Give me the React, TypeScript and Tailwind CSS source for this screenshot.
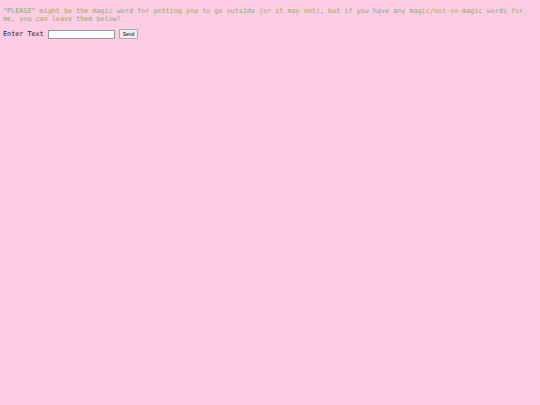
import { useState } from "react";

export default function App() {
  const [text, setText] = useState("");

  return (
    <div className="min-h-[405px] w-full bg-[#ffcce6] p-[3px] font-['DejaVu_Sans_Mono',monospace] text-[6.75px] leading-[8px]">
      <p className="mt-[4px] text-[#84b35c]">
        "PLEASE" might be the magic word for getting you to go outside (or it may not), but if you have any magic/not-so-magic words for me, you can leave them below!
      </p>
      <form
        className="mt-[6px] flex items-center"
        onSubmit={(e) => {
          e.preventDefault();
          setText("");
        }}
      >
        <label className="text-[#222]">Enter Text</label>
        <input
          value={text}
          onChange={(e) => setText(e.target.value)}
          className="ml-[4px] h-[9px] w-[67px] border border-[#999] bg-white px-[1px] text-[6px]"
        />
        <button
          type="submit"
          className="ml-[4px] h-[10px] rounded-[1px] border border-[#aaa] bg-[#efefef] px-[3px] font-['Liberation_Sans',sans-serif] text-[5px] leading-none text-black"
        >
          Send
        </button>
      </form>
    </div>
  );
}
